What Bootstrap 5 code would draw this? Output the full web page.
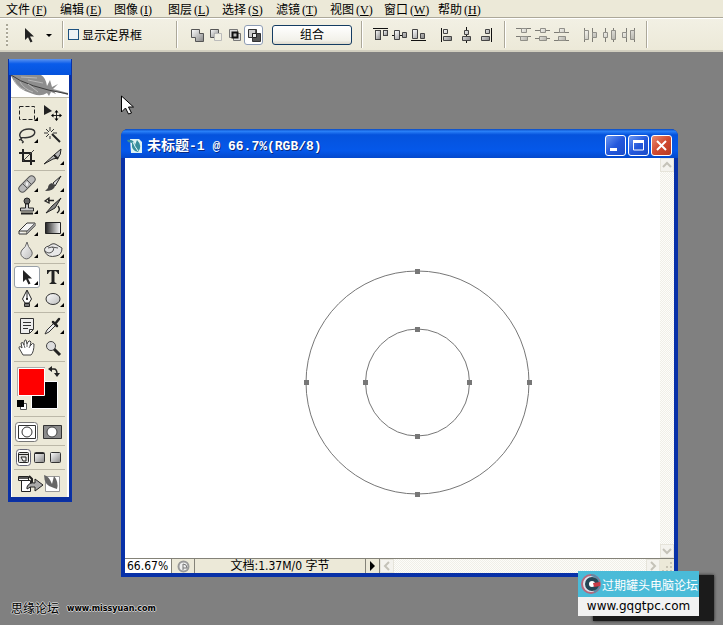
<!DOCTYPE html>
<html lang="zh-CN">
<head>
<meta charset="utf-8">
<meta name="viewport" content="width=device-width, initial-scale=1">
<title>未标题-1 @ 66.7%(RGB/8)</title>
<link href="https://cdn.jsdelivr.net/npm/bootstrap@5.3.0/dist/css/bootstrap.min.css" rel="stylesheet">
<style>
:root{--face:#ece9d8;--ui:"DejaVu Sans Condensed","Noto Sans CJK SC",sans-serif}
body{background:#808080;font-family:var(--ui);font-size:12px;line-height:14px;color:#000}
svg{display:block;overflow:visible}
button{color:#000;font-size:12px;line-height:14px}
.bare{background:none;border:0;padding:0}
.menu-strip{background:var(--face);height:18px;padding-left:6px;border-bottom:1px solid #aca899}
.menu-strip a{width:54px;color:#000;font:12px/17px "Noto Sans CJK SC",sans-serif;white-space:nowrap}
.menu-strip span{font:12px/14px "Liberation Serif",serif;margin-left:2px}
.options{background:linear-gradient(#f2f0e4,#ece9d8);height:34px;border-top:1px solid #fff;border-bottom:2px solid #d2cfc0;padding-left:6px}
.grip{width:2px;height:22px;background:repeating-linear-gradient(#aaa797 0 2px,#f6f4ea 2px 4px);margin-right:14px}
.vline{width:2px;height:27px;border-left:1px solid #aca899;border-right:1px solid #fff}
.current-tool{width:34px;margin-right:6px}
.form-check-input.tick{width:11px;height:11px;margin:0 3px 0 0;border:1px solid #1c5180;border-radius:0;background-color:#edf1f4}
.tick-label{font:12px/17px "Noto Sans CJK SC",sans-serif;width:94px}
.tb{width:19px;height:20px}
.tb.on{background:#fff;border:1px solid #8e9db5;border-radius:3px}
.gap-after{margin-right:9px}
.combine{width:80px;height:20px;margin:0 9px;border:1px solid #143c62;border-radius:3px;background:linear-gradient(#fff,#f2f1ea 80%,#dcd8cc)}
.faded{opacity:.55}
.desk{position:relative;flex:1 1 auto;min-height:573px}
.palette{position:absolute;left:8px;top:7px;width:64px;background:#0a2fa0;padding:0 2px 4px;border:1px solid #0831a8;border-top:0}
.palette header{height:16px;margin:0 -2px;background:linear-gradient(#5b93f0,#0a5cea 30%,#0553dd)}
.feather{height:23px;background:#fff;overflow:hidden;border-bottom:1px solid #bcb8a8}
.tools{background:var(--face);padding:4px 2px 0;border-left:1px solid #fff;border-right:2px solid #fff}
.group{display:grid;grid-template-columns:repeat(2,26px);padding-bottom:2px;margin-bottom:2px;border-bottom:1px solid #bcb8a8}
.group button,.mask button{height:22px;display:grid;place-items:center}
.group .picked{background:#fff;border:1px solid #98a0a8;border-radius:3px}
.swatches{height:53px;border-bottom:1px solid #bcb8a8}
.mask{display:grid;grid-template-columns:repeat(2,26px);padding:4px 0 2px;border-bottom:1px solid #bcb8a8}
.screens{display:grid;grid-template-columns:repeat(3,16px);padding:3px 1px;border-bottom:1px solid #bcb8a8}
.screens button{height:17px;display:grid;place-items:center}
.jump{height:27px;width:52px;display:grid;place-items:center}
.doc{position:absolute;left:121px;top:77px;width:557px;border-radius:7px 7px 0 0;background:#0831a8;padding:0 4px 4px;border:0}
.doc-title{height:29px;margin:0 -4px;padding:0 6px;border-radius:7px 7px 0 0;background:linear-gradient(#0a4ac0,#2a80f8 8%,#0553dd 20%,#0558ea 75%,#0448cc);color:#fff;text-shadow:1px 1px #0a2a80}
.doc-title h1{margin:0 auto 0 4px;font:bold 13px/18px "Liberation Mono",monospace;white-space:pre}
.doc-title h1 span{font:bold 14px/18px "Noto Sans CJK SC",sans-serif}
.cap{width:21px;height:21px;margin-left:2px;border:1px solid #fff;border-radius:3px;background:linear-gradient(135deg,#6a97f2,#2458dc 50%,#1b4cc8);display:grid;place-items:center}
.cap.shut{background:linear-gradient(135deg,#ea8a70,#d14a30 50%,#b83a22)}
.work{display:grid;grid-template-columns:1fr 14px;background:#fff}
.work>svg{width:100%;height:auto}
.track{background:repeating-conic-gradient(#f0efe8 0 25%,#fdfdfa 0 50%) 0 0/2px 2px}
.arrow{width:14px;height:14px;border:1px solid #e6e4da;background:#f4f3ee;display:grid;place-items:center}
.status{height:15px;background:var(--face);border-top:1px solid #848278}
.zoom{width:47px;height:14px;border:0;border-right:1px solid #848278;padding:0 2px;font:12px/14px var(--ui);background:#fff;border-radius:0}
.stat-icon{width:23px;height:14px;border-right:1px solid #848278;display:grid;place-items:center}
.stat-text{width:171px;height:14px;border-right:1px solid #848278;text-align:center;font-size:12px}
.stat-more{width:14px;height:14px;border-right:1px solid #848278;display:grid;place-items:center}
.pointer{position:absolute;left:120px;top:43px}
.forum{position:absolute;left:11px;bottom:7px;gap:8px;text-shadow:1px 0 #ccc,-1px 0 #ccc,0 1px #ccc,0 -1px #ccc}
.forum b{font:12px/16px "Noto Sans CJK SC",sans-serif}
.forum i{font:normal bold 8px/18px "DejaVu Sans",sans-serif}
.shade{position:absolute;left:593px;top:523px;width:121px;height:46px;background:#1b1b1b;box-shadow:0 0 3px #222}
.site{position:absolute;left:578px;top:519px;width:121px;background:#f2f2f2;color:#000;text-decoration:none}
.site-name{height:26px;background:#4abbd8;color:#fff;padding:0 0 0 3px;font:12px/17px "Noto Sans CJK SC",sans-serif;white-space:nowrap}
.site-url{font:12px/19px "DejaVu Sans",sans-serif;text-align:center;color:#000}
</style>
<script src="https://cdn.jsdelivr.net/npm/bootstrap@5.3.0/dist/js/bootstrap.bundle.min.js"></script>
</head>
<body class="d-flex flex-column min-vh-100 overflow-hidden">
<svg width="0" height="0" class="position-absolute" aria-hidden="true">
<defs>
<linearGradient id="steel" x1="0" y1="0" x2="1" y2="1"><stop stop-color="#fff"/><stop offset="1" stop-color="#858585"/></linearGradient>
<linearGradient id="pearl" x1="0" y1="0" x2="1" y2="1"><stop stop-color="#fff"/><stop offset="1" stop-color="#bdbdbd"/></linearGradient>
<linearGradient id="fade"><stop stop-color="#222"/><stop offset="1" stop-color="#fff"/></linearGradient>
<path id="more" d="M11 4V8H7z" fill="#000"/>
<path id="cursor" d="M0 0V12L3 9.300L5.500 14.500L7.500 13.500L5 8.500H9z"/>
<g id="bars" stroke="#444"><rect x="-5.500" y="-5.500" width="5" height="9" fill="url(#steel)"/><rect x="2.500" y="-5.500" width="4" height="5" fill="url(#steel)"/></g>
</defs>
</svg>

<nav class="menu-strip d-flex" aria-label="菜单">
<a class="text-decoration-none" href="#">文件<span>(<u>F</u>)</span></a>
<a class="text-decoration-none" href="#">编辑<span>(<u>E</u>)</span></a>
<a class="text-decoration-none" href="#">图像<span>(<u>I</u>)</span></a>
<a class="text-decoration-none" href="#">图层<span>(<u>L</u>)</span></a>
<a class="text-decoration-none" href="#">选择<span>(<u>S</u>)</span></a>
<a class="text-decoration-none" href="#">滤镜<span>(<u>T</u>)</span></a>
<a class="text-decoration-none" href="#">视图<span>(<u>V</u>)</span></a>
<a class="text-decoration-none" href="#">窗口<span>(<u>W</u>)</span></a>
<a class="text-decoration-none" href="#">帮助<span>(<u>H</u>)</span></a>
</nav>

<div class="options d-flex align-items-center" role="toolbar" aria-label="选项">
<div class="grip"></div>
<button class="bare current-tool" aria-label="路径选择工具"><svg width="34" height="18"><use href="#cursor" x="3" y="2" fill="#222"/><path d="M24 8h6l-3 3z"/></svg></button>
<div class="vline me-1"></div>
<input class="form-check-input tick" type="checkbox" id="bounds"><label class="tick-label" for="bounds">显示定界框</label>
<div class="vline gap-after"></div>
<div class="d-flex">
<button class="bare tb" aria-label="添加到形状区域"><svg width="19" height="20"><path d="M4.500 4.500h8v4h4v8h-8v-4h-4z" fill="url(#steel)" stroke="#555"/></svg></button>
<button class="bare tb" aria-label="从形状区域减去"><svg width="19" height="20"><path d="M4.500 4.500h8v4h-4v4h-4z" fill="url(#steel)" stroke="#555"/><path d="M8.500 8.500h7v7h-7z" fill="#f2f0e4" stroke="#bbb"/></svg></button>
<button class="bare tb" aria-label="交叉形状区域"><svg width="19" height="20"><path d="M4.500 4.500h8v8h-8zM8.500 8.500h7v7h-7z" fill="#ddd" stroke="#777"/><path d="M7.500 7.500h5v5h-5z" fill="#bbb" stroke="#111" stroke-width="2"/></svg></button>
<button class="bare tb on" aria-label="重叠形状区域除外"><svg width="17" height="18"><path d="M3.500 3.500h8v4h4v8h-8v-4h-4z" fill="#555" stroke="#333"/><path d="M4 4h6v3h-3v4H4z" fill="#ccc"/><path d="M7.500 7.500h4v4h-4z" fill="#eee" stroke="#222"/></svg></button>
</div>
<button class="combine p-0">组合</button>
<div class="vline gap-after"></div>
<div class="d-flex">
<button class="bare tb" aria-label="顶对齐"><svg width="19" height="20" viewBox="-9 -10 19 20"><path d="M-8-6.500H7" stroke="#111"/><use href="#bars" y="1"/></svg></button>
<button class="bare tb" aria-label="垂直居中对齐"><svg width="19" height="20" viewBox="-9 -10 19 20"><path d="M-8 .5H7" stroke="#111"/><path d="M-5.500-4.500h5v9h-5zM2.500-2.500h4v5h-4z" fill="url(#steel)" stroke="#444"/></svg></button>
<button class="bare tb gap-after" aria-label="底对齐"><svg width="19" height="20" viewBox="-9 -10 19 20"><path d="M-8 5.500H7" stroke="#111"/><path d="M-6.500-5.500h5v9h-5zM1.500-1.500h4v5h-4z" fill="url(#steel)" stroke="#444"/></svg></button>
<button class="bare tb" aria-label="左对齐"><svg width="19" height="20" viewBox="-9 -10 19 20"><path d="M-5.500-7V7" stroke="#111"/><path d="M-3.500-5.500h4v4h-4zM-3.500 1.500h8v4h-8z" fill="url(#steel)" stroke="#444"/></svg></button>
<button class="bare tb" aria-label="水平居中对齐"><svg width="19" height="20" viewBox="-9 -10 19 20"><path d="M.5-8V8" stroke="#111"/><path d="M-1.500-4.500h4v4h-4zM-3.500 1.500h8v4h-8z" fill="url(#steel)" stroke="#444"/></svg></button>
<button class="bare tb gap-after" aria-label="右对齐"><svg width="19" height="20" viewBox="-9 -10 19 20"><path d="M6.500-7V7" stroke="#111"/><path d="M.5-5.500h4v4h-4zM-3.500 1.500h8v4h-8z" fill="url(#steel)" stroke="#444"/></svg></button>
</div>
<div class="vline gap-after"></div>
<div class="d-flex faded">
<button class="bare tb" aria-label="按顶分布"><svg width="19" height="20" viewBox="-9 -10 19 20"><path d="M-8-6.500H7M-8 1.500H7" stroke="#222"/><path d="M-2.500-6.500h5v4h-5zM-3.500 1.500h7v4h-7z" fill="url(#steel)" stroke="#444"/></svg></button>
<button class="bare tb" aria-label="垂直居中分布"><svg width="19" height="20" viewBox="-9 -10 19 20"><path d="M-8-4.500H7M-8 3.500H7" stroke="#222"/><path d="M-2.500-6.500h5v4h-5zM-3.500 1.500h7v4h-7z" fill="url(#steel)" stroke="#444"/></svg></button>
<button class="bare tb gap-after" aria-label="按底分布"><svg width="19" height="20" viewBox="-9 -10 19 20"><path d="M-8-2.500H7M-8 5.500H7" stroke="#222"/><path d="M-2.500-6.500h5v4h-5zM-3.500 1.500h7v4h-7z" fill="url(#steel)" stroke="#444"/></svg></button>
<button class="bare tb" aria-label="按左分布"><svg width="19" height="20" viewBox="-9 -10 19 20"><path d="M-5.500-7V7M2.500-7V7" stroke="#222"/><path d="M-5.500-4.500h4v9h-4zM2.500-2.500h4v5h-4z" fill="url(#steel)" stroke="#444"/></svg></button>
<button class="bare tb" aria-label="水平居中分布"><svg width="19" height="20" viewBox="-9 -10 19 20"><path d="M-3.500-7V7M4.500-7V7" stroke="#222"/><path d="M-5.500-2.500h4v5h-4zM2.500-4.500h4v9h-4z" fill="url(#steel)" stroke="#444"/></svg></button>
<button class="bare tb me-2" aria-label="按右分布"><svg width="19" height="20" viewBox="-9 -10 19 20"><path d="M-1.500-7V7M6.500-7V7" stroke="#222"/><path d="M-5.500-2.500h4v5h-4zM2.500-4.500h4v9h-4z" fill="url(#steel)" stroke="#444"/></svg></button>
</div>
<div class="vline"></div>
</div>

<main class="desk">
<aside class="palette" aria-label="工具">
<header></header>
<div class="feather"><svg width="58" height="22"><path d="M0 1Q6 15 22 19Q30 22 36 18L38 21L40 17L45 19L43 16L57 20V18L42 14L47 9L41 12L39 5L36 11Q35 3 30 0H0z" fill="#8e8e8e"/><path d="M0 0Q16 12 57 19" fill="none" stroke="#3c3c3c"/><path d="M3 5Q6 12 14 15M9 7Q13 14 22 17M17 9L27 17M10 2L26 3M17 5L32 8" stroke="#b8b8b8" fill="none"/></svg></div>
<div class="tools">
<div class="group">
<button class="bare" aria-label="矩形选框"><svg width="24" height="20" viewBox="-12 -10 24 20"><path d="M-7.500-6.500h15v13h-15z" fill="none" stroke="#222" stroke-dasharray="4 2"/><use href="#more"/></svg></button>
<button class="bare" aria-label="移动"><svg width="24" height="20" viewBox="-12 -10 24 20"><path d="M-9-8V2L-1-2z" fill="#222"/><path d="M3.500-2v9M-1 2.500h9" stroke="#222"/><path d="M3.500-3l-2 2.500h4zM3.500 8l-2-2.500h4zM-2 2.500l2.500-2v4zM9 2.500l-2.500-2v4z"/></svg></button>
<button class="bare" aria-label="套索"><svg width="24" height="20" viewBox="-12 -10 24 20"><path d="M-5 4C-10 0-6-6 2-6S9 0 3 2S-7 1-6 4S-2 6-5 8M-5 4l-3 1" fill="none" stroke="#333" stroke-width="1.400"/><use href="#more"/></svg></button>
<button class="bare" aria-label="魔棒"><svg width="24" height="20" viewBox="-12 -10 24 20"><path d="M-1-1L7 7" stroke="#222" stroke-width="2"/><path d="M-3-8v4M-3 1v3M-9-2h4M0-2h4M-7-6l3 3M1-6l-3 3M-7 2l3-3" stroke="#333"/></svg></button>
<button class="bare" aria-label="裁切"><svg width="24" height="20" viewBox="-12 -10 24 20"><path d="M-4-8V4H8M-8-4H4V8" fill="none" stroke="#222" stroke-width="2"/><path d="M-4 4L7-7" stroke="#444"/></svg></button>
<button class="bare" aria-label="切片"><svg width="24" height="20" viewBox="-12 -10 24 20"><path d="M8-8Q8-2 5 1L0 2L-9 7L1-2z" fill="url(#steel)" stroke="#222"/><path d="M1-2L5 2" stroke="#222" stroke-width="2"/><use href="#more"/></svg></button>
</div>
<div class="group">
<button class="bare" aria-label="修复画笔"><svg width="24" height="20" viewBox="-12 -10 24 20"><rect x="-10" y="-3.500" width="20" height="7" rx="3.500" transform="rotate(-45)" fill="#bbb" stroke="#555"/><path d="M-4 0L0 4M0-4L4 0" stroke="#555"/><path d="M-1 0h2M0-2v4" stroke="#fff"/><use href="#more"/></svg></button>
<button class="bare" aria-label="画笔"><svg width="24" height="20" viewBox="-12 -10 24 20"><path d="M8-8L0-1L2 2z" fill="#ddd" stroke="#222"/><path d="M-1-1Q-5 0-5 4L-8 7Q1 7 2 2z" fill="#444"/><use href="#more"/></svg></button>
<button class="bare" aria-label="图章"><svg width="24" height="20" viewBox="-12 -10 24 20"><circle cy="-5" r="3" fill="#666" stroke="#222"/><path d="M-1.500-2h3v4h5v3h-13V2h5z" fill="#ccc" stroke="#222"/><path d="M-6 7.500H6" stroke="#222" stroke-width="2"/><use href="#more"/></svg></button>
<button class="bare" aria-label="历史画笔"><svg width="24" height="20" viewBox="-12 -10 24 20"><path d="M8-8L-1 0L-7 7L2 2z" fill="#888" stroke="#222"/><path d="M-8-5L-4-8V-3zM-5-5.500H1M4 7Q8 4 5 0" fill="none" stroke="#222" stroke-width="1.300"/><use href="#more"/></svg></button>
<button class="bare" aria-label="橡皮擦"><svg width="24" height="20" viewBox="-12 -10 24 20"><path d="M-8 3L0-5H8L0 3zM-8 3V6H0V3L8-5V-2L0 6" fill="#f4f4f4" stroke="#333"/><path d="M0 3L8-5V-2L0 6z" fill="#999"/><use href="#more"/></svg></button>
<button class="bare" aria-label="渐变"><svg width="24" height="20" viewBox="-12 -10 24 20"><path d="M-7.500-5.500h15v11h-15z" fill="url(#fade)" stroke="#222"/><use href="#more"/></svg></button>
<button class="bare" aria-label="模糊"><svg width="24" height="20" viewBox="-12 -10 24 20"><path d="M0-8Q1-3 4 0A5.500 5.500 0 1 1-5 0Q-1-3 0-8z" fill="url(#pearl)" stroke="#666"/><use href="#more"/></svg></button>
<button class="bare" aria-label="海绵"><svg width="24" height="20" viewBox="-12 -10 24 20"><path d="M-8 2Q-10-3-4-4Q0-8 4-5L9-2Q9 5 3 6Q-5 8-8 2z" fill="#e8e8e8" stroke="#444"/><path d="M-8 1Q-4 5 0 1Q2-2-1-3L-5-2M-1-3L5-2" fill="none" stroke="#555"/><use href="#more"/></svg></button>
</div>
<div class="group">
<button class="bare picked" aria-label="路径选择"><svg width="24" height="20" viewBox="-12 -10 24 20"><use href="#cursor" x="-4" y="-7" fill="#222"/><use href="#more"/></svg></button>
<button class="bare" aria-label="文字"><svg width="24" height="20" viewBox="-12 -10 24 20"><path d="M-6-7H6V-3H5Q4-6 1.500-6V5L4 7H-4L-1.500 5V-6Q-4-6-5-3H-6z" fill="#222"/><use href="#more"/></svg></button>
<button class="bare" aria-label="钢笔"><svg width="24" height="20" viewBox="-12 -10 24 20"><path d="M0-9L4.500 0L2 4H-2L-4.500 0z" fill="#fff" stroke="#222"/><path d="M0-8V0" stroke="#222"/><circle r="1"/><path d="M-2.500 4.500h5v3h-5z" fill="#777" stroke="#222"/><use href="#more"/></svg></button>
<button class="bare" aria-label="椭圆"><svg width="24" height="20" viewBox="-12 -10 24 20"><ellipse rx="7" ry="5.500" fill="url(#pearl)" stroke="#333"/><use href="#more"/></svg></button>
</div>
<div class="group">
<button class="bare" aria-label="注释"><svg width="24" height="20" viewBox="-12 -10 24 20"><path d="M-6.500-7.500h13v11l-4 4h-9z" fill="#eee" stroke="#333"/><path d="M-4-3.500h8M-4-.5h8M-4 2.500h5M2.500 7V3.500H6" stroke="#333" fill="none"/><use href="#more"/></svg></button>
<button class="bare" aria-label="吸管"><svg width="24" height="20" viewBox="-12 -10 24 20"><path d="M-8 8L-6 4L1-3L3-1L-4 6z" fill="#eee" stroke="#333"/><path d="M0-4L4 0M2-2L6-7" stroke="#222" stroke-width="2.500" stroke-linecap="round"/><use href="#more"/></svg></button>
<button class="bare" aria-label="抓手"><svg width="24" height="20" viewBox="-12 -10 24 20"><path d="M-4 7L-8 0Q-8-3-5 0L-6-5Q-4-7-3-3Q-3-9-1-8L0-4Q2-9 4-6L3-2Q6-6 7-4Q7 4 4 7z" fill="#fff" stroke="#444"/><path d="M-3-3l1 3M0-4v3M3-2L2 0" stroke="#666"/></svg></button>
<button class="bare" aria-label="缩放"><svg width="24" height="20" viewBox="-12 -10 24 20"><path d="M1 1L7 7" stroke="#222" stroke-width="3"/><circle cx="-2" cy="-2" r="4.500" fill="#ddd" stroke="#444"/></svg></button>
</div>
<div class="swatches"><svg width="52" height="52" role="img" aria-label="前景色和背景色"><path d="M17.500 17.500h26v27h-26z" fill="#000" stroke="#fff"/><path d="M4.500 4.500h26v27h-26z" fill="#f00" stroke="#fff"/><path d="M3.500 32V3.500H31" fill="none" stroke="#aaa"/><path d="M37 5h3q3 0 3 5" fill="none" stroke="#222" stroke-width="1.500"/><path d="M34 5l4-3v6zM43 13l-3-4h6z" fill="#222"/><path d="M6.500 39.500h6v6h-6z" fill="#fff" stroke="#555"/><path d="M3 36h7v7H3z"/></svg></div>
<div class="mask">
<button class="bare" aria-label="标准模式"><svg width="24" height="20"><rect x=".5" y=".5" width="22" height="19" rx="3" fill="#fff" stroke="#777"/><path d="M3.500 3.500h17v13h-17z" fill="#fff" stroke="#333"/><circle cx="12" cy="10" r="5" fill="#fff" stroke="#333"/></svg></button>
<button class="bare" aria-label="快速蒙版"><svg width="24" height="20"><path d="M2.500 3.500h18v13h-18z" fill="#8c8c8c" stroke="#333"/><circle cx="11" cy="10" r="5" fill="#fff" stroke="#444"/></svg></button>
</div>
<div class="screens">
<button class="bare" aria-label="标准屏幕"><svg width="15" height="17"><rect x=".5" y=".5" width="14" height="16" rx="3" fill="#fff" stroke="#667"/><rect x="2.500" y="3.500" width="10" height="10" rx="1" fill="#ddd" stroke="#222"/><path d="M3 5.500h9M5 8h5v4H7z" fill="#eee" stroke="#222"/></svg></button>
<button class="bare" aria-label="带菜单全屏"><svg width="15" height="17"><rect x="2.500" y="3.500" width="10" height="10" rx="1" fill="url(#steel)" stroke="#333"/><path d="M3 4.500h9" stroke="#222"/></svg></button>
<button class="bare" aria-label="全屏"><svg width="15" height="17"><rect x="2.500" y="3.500" width="10" height="10" rx="1" fill="url(#steel)" stroke="#333"/></svg></button>
</div>
<button class="bare jump" aria-label="跳转到 ImageReady"><svg width="46" height="20"><path d="M1.500 2.500h10v4h-10zM4.500 6.500h9v11h-9z" fill="#fff" stroke="#222"/><path d="M2 3h9v2H2z" fill="#555"/><path d="M12 2l3 3v4" fill="none" stroke="#222" stroke-width="2"/><path d="M10 13Q12 8 18 9V5l8 6l-8 6v-4Q13 12 10 15z" fill="#aaa" stroke="#222"/><path d="M28.500 2.500h14v15h-14z" fill="#fff" stroke="#999"/><path d="M27 1Q32 2 35 10L37 2Q42 8 40 15L37 14Q27 12 27 1z" fill="#666"/></svg></button>
</div>
</aside>

<section class="doc">
<div class="doc-title d-flex align-items-center pt-1">
<svg width="16" height="16" aria-hidden="true"><path d="M3 1h9l3 3v11H4z" fill="#dff4f4"/><path d="M0 2Q7 1 8 7L10 2Q16 8 11 14Q4 13 5 5L1 4z" fill="#378e9c"/><path d="M6 4Q8 9 11 13" stroke="#e8ffff" fill="none"/></svg>
<h1><span>未标题</span>-1 @ 66.7%(RGB/8)</h1>
<button class="cap p-0" aria-label="最小化"><svg width="19" height="19"><path d="M4 12h7v3H4z" fill="#fff"/></svg></button>
<button class="cap p-0" aria-label="最大化"><svg width="19" height="19"><path d="M4.500 5h10v9h-10z" fill="none" stroke="#fff"/><path d="M4 4h11v3H4z" fill="#fff"/></svg></button>
<button class="cap shut p-0" aria-label="关闭"><svg width="19" height="19"><path d="M5 5l9 9M14 5l-9 9" stroke="#fff" stroke-width="2"/></svg></button>
</div>
<div class="work">
<svg viewBox="0 0 535 400" role="img" aria-label="路径">
<g fill="none" stroke="#777"><circle cx="292.500" cy="224.500" r="111.500"/><ellipse cx="292.500" cy="224.500" rx="52" ry="53.500"/></g>
<path fill="#777" d="M290 111h5v5h-5zM290 334h5v5h-5zM179 222h5v5h-5zM402 222h5v5h-5zM290 169h5v5h-5zM290 276h5v5h-5zM238 222h5v5h-5zM342 222h5v5h-5z"/>
</svg>
<div class="track d-flex flex-column justify-content-between">
<button class="arrow p-0" aria-label="向上滚动"><svg width="10" height="10"><path d="M1 7l4-4l4 4" fill="none" stroke="#c4c2b8" stroke-width="2"/></svg></button>
<button class="arrow p-0" aria-label="向下滚动"><svg width="10" height="10"><path d="M1 3l4 4l4-4" fill="none" stroke="#c4c2b8" stroke-width="2"/></svg></button>
</div>
</div>
<div class="status d-flex">
<input class="zoom" value="66.67%" aria-label="显示比例">
<div class="stat-icon"><svg width="13" height="13"><circle cx="6.500" cy="6.500" r="5" fill="#eee" stroke="#999" stroke-width="2"/><path d="M6 10V4q4 0 4 4H6" fill="none" stroke="#777"/></svg></div>
<div class="stat-text">文档:1.37M/0 字节</div>
<button class="bare stat-more" aria-label="更多"><svg width="6" height="10"><path d="M0 0l5 5l-5 5z"/></svg></button>
<div class="track d-flex flex-fill justify-content-between">
<button class="arrow p-0" aria-label="向左滚动"><svg width="10" height="10"><path d="M7 1L3 5l4 4" fill="none" stroke="#c4c2b8" stroke-width="2"/></svg></button>
<button class="arrow p-0" aria-label="向右滚动"><svg width="10" height="10"><path d="M3 1l4 4l-4 4" fill="none" stroke="#c4c2b8" stroke-width="2"/></svg></button>
</div>
<svg width="14" height="14"><path d="M10 3h2v2h-2zM6 7h2v2H6zM10 7h2v2h-2zM2 11h2v2H2zM6 11h2v2H6zM10 11h2v2h-2z" fill="#c8c4b4"/></svg>
</div>
</section>

<svg class="pointer" width="14" height="20" aria-hidden="true"><path d="M1.500 1v16l4-4l3 6l3-1l-3-6h5z" fill="#fff" stroke="#000"/></svg>
<div class="forum d-flex"><b>思缘论坛</b><i>www.missyuan.com</i></div>
<div class="shade"></div>
<a class="site" href="#">
<div class="site-name d-flex align-items-center"><svg class="flex-shrink-0" width="21" height="22"><circle cx="10" cy="11" r="9" fill="#dfe6ee" stroke="#b8687c" stroke-width="2"/><path d="M10 2a9 9 0 0 1 3 17" fill="none" stroke="#5d8ca8" stroke-width="2"/><circle cx="11" cy="11" r="5" fill="#fff" stroke="#244656" stroke-width="4"/><path d="M12 10l7-1v4l-6 1z" fill="#c83a46"/></svg>过期罐头电脑论坛</div>
<div class="site-url">www.gqgtpc.com</div>
</a>
</main>
</body>
</html>
